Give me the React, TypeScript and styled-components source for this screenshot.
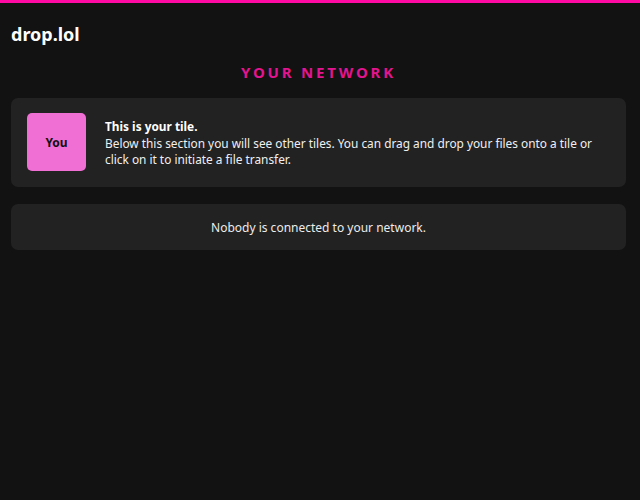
import React from "react";
import styled, { createGlobalStyle } from "styled-components";

const Global = createGlobalStyle`
  html, body { margin: 0; padding: 0; background: #121212; }
  body { font-family: "Noto Sans", "Open Sans", sans-serif; color: #f2f2f2; }
  * { box-sizing: border-box; }
`;

const Page = styled.div`
  min-height: 500px;
  border-top: 3px solid #ff0aa3;
  padding: 0 14px 0 11px;
  display: flex;
  flex-direction: column;
`;

const Title = styled.h1`
  margin: 19px 0 0;
  font-size: 18px;
  font-weight: 700;
  line-height: 24px;
  color: #fff;
`;

const Heading = styled.h2`
  margin: 16px 0 0;
  text-align: center;
  font-size: 15px;
  line-height: 20px;
  font-weight: 700;
  letter-spacing: 2.8px;
  color: #e3148f;
`;

const Card = styled.div<{ $mt: number }>`
  background: #222222;
  border-radius: 7px;
  margin-top: ${(p) => p.$mt}px;
`;

const TileCard = styled(Card)`
  display: flex;
  align-items: center;
  gap: 19px;
  padding: 15px 16px 16px 16px;
`;

const Tile = styled.div`
  flex: 0 0 59px;
  width: 59px;
  height: 58px;
  border-radius: 5px;
  background: #ef6fd4;
  color: #111;
  font-weight: 700;
  font-size: 12px;
  display: flex;
  align-items: center;
  justify-content: center;
`;

const Info = styled.div`
  font-size: 11.85px;
  line-height: 16.5px;
  color: #f0f0f0;
  align-self: flex-start;
  margin-top: 5px;
`;

const Strong = styled.div`
  font-weight: 700;
  color: #fff;
`;

const EmptyCard = styled(Card)`
  height: 46px;
  display: flex;
  align-items: center;
  justify-content: center;
  font-size: 12px;
  color: #ececec;
`;

export default function App() {
  return (
    <>
      <Global />
      <Page>
        <Title>drop.lol</Title>
        <Heading>YOUR NETWORK</Heading>
        <TileCard $mt={16}>
          <Tile>You</Tile>
          <Info>
            <Strong>This is your tile.</Strong>
            Below this section you will see other tiles. You can drag and drop your files onto a tile or click on it to initiate a file transfer.
          </Info>
        </TileCard>
        <EmptyCard $mt={17}>Nobody is connected to your network.</EmptyCard>
      </Page>
    </>
  );
}
